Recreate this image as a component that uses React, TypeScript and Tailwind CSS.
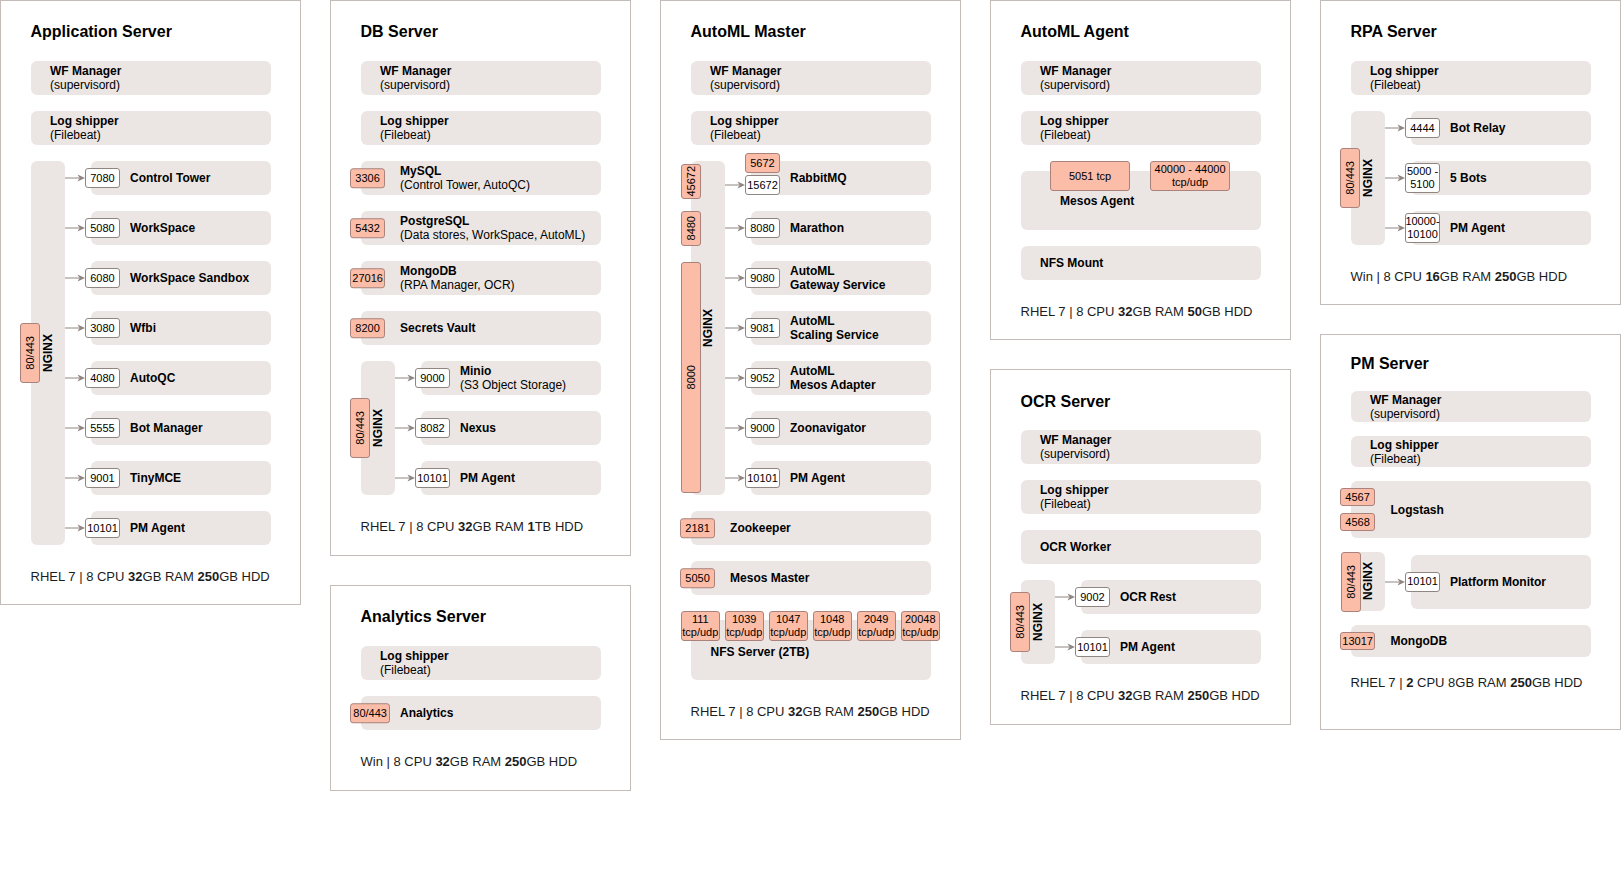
import type { ReactNode } from 'react'

const ROW = 'bg-[#ebe6e4] rounded-[6px]'
const TAG = 'bg-[#fbbca8] border border-[#a9827b] rounded-[3px]'
const PORT = 'bg-white border border-[#8f8682] rounded-[3px]'

function Card({
  title,
  className,
  pad = 'pt-[21px]',
  titleGap = 'mt-[19px]',
  gap = 'gap-[16px]',
  footerGap = 'mt-[24px]',
  footer,
  children,
}: {
  title: string
  className: string
  pad?: string
  titleGap?: string
  gap?: string
  footerGap?: string
  footer: ReactNode
  children: ReactNode
}) {
  return (
    <div className={`w-[301px] shrink-0 border border-[#c3bcb8] bg-white pl-[29.5px] pr-[29.5px] flex flex-col ${pad} ${className}`}>
      <div className="text-[16px] leading-[20px] font-bold text-black">{title}</div>
      <div className={`flex flex-col ${titleGap} ${gap}`}>{children}</div>
      <div className={`text-[13px] leading-[15px] text-[#1c1c1c] whitespace-nowrap ${footerGap}`}>{footer}</div>
    </div>
  )
}

function Label({ a, b, bb }: { a: string; b?: string; bb?: boolean }) {
  return (
    <div className="text-[12px] leading-[14px] text-black whitespace-nowrap">
      <div className="font-bold">{a}</div>
      {b && <div className={bb ? 'font-bold' : ''}>{b}</div>}
    </div>
  )
}

function Row({ h = 'h-[34px]', children }: { h?: string; children: ReactNode }) {
  return <div className={`relative ${ROW} ${h} flex items-center pl-[19.5px]`}>{children}</div>
}

function TagRow({
  tag,
  h = 'h-[34px]',
  tagW = 'w-[35px]',
  children,
}: {
  tag: string
  h?: string
  tagW?: string
  children: ReactNode
}) {
  return (
    <div className={`relative ${ROW} ${h} flex items-center pl-[39.6px]`}>
      <div className={`absolute left-[-10.4px] top-1/2 -translate-y-1/2 ${tagW} h-[19.5px] ${TAG} flex items-center justify-center text-[11px] leading-[12px] text-black`}>
        {tag}
      </div>
      {children}
    </div>
  )
}

function Arrow({ className = '' }: { className?: string }) {
  return (
    <svg width="20" height="10" viewBox="0 0 20 10" className={`shrink-0 ${className}`}>
      <path d="M0 5H14" stroke="#8f8682" strokeWidth="1" />
      <path d="M20 5L12.5 1.5L14.5 5L12.5 8.5Z" fill="#8f8682" />
    </svg>
  )
}

function VTag({ className, children }: { className: string; children: ReactNode }) {
  return (
    <div className={`absolute w-[20px] ${TAG} flex items-center justify-center ${className}`}>
      <span className="[writing-mode:vertical-rl] rotate-180 text-[11px] leading-[12px] text-black whitespace-nowrap">{children}</span>
    </div>
  )
}

function Nginx({ tags, className = '', children }: { tags?: ReactNode; className?: string; children: ReactNode }) {
  return (
    <div className={`flex ${className}`}>
      <div className={`relative w-[34.5px] shrink-0 ${ROW} flex items-center justify-center`}>
        <span className="[writing-mode:vertical-rl] rotate-180 text-[12px] leading-[14px] font-bold text-black">NGINX</span>
        {tags ?? <VTag className="left-[-10.4px] top-1/2 -translate-y-1/2 h-[60px]">80/443</VTag>}
      </div>
      <div className="flex-1 flex flex-col justify-center gap-[16px]">{children}</div>
    </div>
  )
}

function Item({
  port,
  portH = 'h-[20px]',
  h = 'h-[34px]',
  children,
}: {
  port: ReactNode
  portH?: string
  h?: string
  children: ReactNode
}) {
  return (
    <div className="flex items-center">
      <Arrow />
      <div className={`relative flex-1 ml-[5.5px] ${ROW} ${h} flex items-center pl-[39.5px]`}>
        <div className={`absolute left-[-5.5px] top-1/2 -translate-y-1/2 w-[35px] ${portH} ${PORT} flex flex-col items-center justify-center text-[11px] leading-[13px] text-black whitespace-nowrap`}>
          {port}
        </div>
        {children}
      </div>
    </div>
  )
}

function Std() {
  return (
    <>
      <Row>
        <Label a="WF Manager" b="(supervisord)" />
      </Row>
      <Row>
        <Label a="Log shipper" b="(Filebeat)" />
      </Row>
    </>
  )
}

export default function App() {
  return (
    <div className="w-[1621px] h-[891px] bg-white font-['Liberation_Sans',Arial,sans-serif] flex gap-[29px] items-start overflow-hidden">
      {/* column 1 */}
      <Card
        title="Application Server"
        className="h-[605px]"
        footer={<>RHEL 7 | 8 CPU <b>32</b>GB RAM <b>250</b>GB HDD</>}
      >
        <Std />
        <Nginx>
          <Item port="7080"><Label a="Control Tower" /></Item>
          <Item port="5080"><Label a="WorkSpace" /></Item>
          <Item port="6080"><Label a="WorkSpace Sandbox" /></Item>
          <Item port="3080"><Label a="Wfbi" /></Item>
          <Item port="4080"><Label a="AutoQC" /></Item>
          <Item port="5555"><Label a="Bot Manager" /></Item>
          <Item port="9001"><Label a="TinyMCE" /></Item>
          <Item port="10101"><Label a="PM Agent" /></Item>
        </Nginx>
      </Card>

      {/* column 2 */}
      <div className="flex flex-col gap-[29px]">
        <Card
          title="DB Server"
          className="h-[556px]"
          footer={<>RHEL 7 | 8 CPU <b>32</b>GB RAM <b>1</b>TB HDD</>}
        >
          <Std />
          <TagRow tag="3306"><Label a="MySQL" b="(Control Tower, AutoQC)" /></TagRow>
          <TagRow tag="5432"><Label a="PostgreSQL" b="(Data stores, WorkSpace, AutoML)" /></TagRow>
          <TagRow tag="27016"><Label a="MongoDB" b="(RPA Manager, OCR)" /></TagRow>
          <TagRow tag="8200"><Label a="Secrets Vault" /></TagRow>
          <Nginx>
            <Item port="9000"><Label a="Minio" b="(S3 Object Storage)" /></Item>
            <Item port="8082"><Label a="Nexus" /></Item>
            <Item port="10101"><Label a="PM Agent" /></Item>
          </Nginx>
        </Card>
        <Card
          title="Analytics Server"
          className="h-[206px]"
          footer={<>Win | 8 CPU <b>32</b>GB RAM <b>250</b>GB HDD</>}
        >
          <Row>
            <Label a="Log shipper" b="(Filebeat)" />
          </Row>
          <TagRow tag="80/443" tagW="w-[40px]"><Label a="Analytics" /></TagRow>
        </Card>
      </div>

      {/* column 3 */}
      <Card
        title="AutoML Master"
        className="h-[740px]"
        footer={<>RHEL 7 | 8 CPU <b>32</b>GB RAM <b>250</b>GB HDD</>}
      >
        <Std />
        <Nginx
          tags={
            <>
              <VTag className="left-[-10px] top-[2.5px] h-[35px]">45672</VTag>
              <VTag className="left-[-10px] top-[50px] h-[35px]">8480</VTag>
              <VTag className="left-[-10px] top-[101px] bottom-[2px]">8000</VTag>
            </>
          }
        >
          <div className="flex items-center">
            <Arrow className="translate-y-[7px]" />
            <div className={`relative flex-1 ml-[5.5px] ${ROW} h-[34px] flex items-center pl-[39.5px]`}>
              <div className={`absolute left-[-5.5px] bottom-[22px] w-[35px] h-[20px] ${TAG} flex items-center justify-center text-[11px] text-black`}>5672</div>
              <div className={`absolute left-[-5.5px] bottom-0 w-[35px] h-[20px] ${PORT} flex items-center justify-center text-[11px] text-black`}>15672</div>
              <Label a="RabbitMQ" />
            </div>
          </div>
          <Item port="8080"><Label a="Marathon" /></Item>
          <Item port="9080"><Label a="AutoML" b="Gateway Service" bb /></Item>
          <Item port="9081"><Label a="AutoML" b="Scaling Service" bb /></Item>
          <Item port="9052"><Label a="AutoML" b="Mesos Adapter" bb /></Item>
          <Item port="9000"><Label a="Zoonavigator" /></Item>
          <Item port="10101"><Label a="PM Agent" /></Item>
        </Nginx>
        <TagRow tag="2181"><Label a="Zookeeper" /></TagRow>
        <TagRow tag="5050"><Label a="Mesos Master" /></TagRow>
        <div className="pt-[9px]">
          <div className={`relative ${ROW} h-[60px] pl-[20px] pt-[25px]`}>
            <div className="absolute left-[-10px] top-[-9px] flex gap-[4.5px]">
              {['111', '1039', '1047', '1048', '2049', '20048'].map((p) => (
                <div key={p} className={`${TAG} w-[39.5px] h-[29.5px] flex flex-col items-center justify-center text-[11px] leading-[13px] text-black`}>
                  <span>{p}</span>
                  <span>tcp/udp</span>
                </div>
              ))}
            </div>
            <div className="text-[12px] leading-[14px] font-bold text-black">NFS Server (2TB)</div>
          </div>
        </div>
      </Card>

      {/* column 4 */}
      <div className="flex flex-col gap-[29px]">
        <Card
          title="AutoML Agent"
          className="h-[340px]"
          footer={<>RHEL 7 | 8 CPU <b>32</b>GB RAM <b>50</b>GB HDD</>}
        >
          <Std />
          <div className="pt-[10px]">
            <div className={`relative ${ROW} h-[59px] pl-[39.6px] pt-[23px]`}>
              <div className={`absolute left-[29.6px] top-[-10px] w-[80px] h-[30px] ${TAG} flex items-center justify-center text-[11px] text-black`}>
                5051 tcp
              </div>
              <div className={`absolute left-[129.6px] top-[-10px] w-[80px] h-[30px] ${TAG} flex flex-col items-center justify-center text-[11px] leading-[13px] text-black`}>
                <span>40000 - 44000</span>
                <span>tcp/udp</span>
              </div>
              <div className="text-[12px] leading-[14px] font-bold text-black">Mesos Agent</div>
            </div>
          </div>
          <Row>
            <Label a="NFS Mount" />
          </Row>
        </Card>
        <Card
          title="OCR Server"
          className="h-[356px]"
          pad="pt-[22px]"
          titleGap="mt-[18px]"
          footer={<>RHEL 7 | 8 CPU <b>32</b>GB RAM <b>250</b>GB HDD</>}
        >
          <Std />
          <Row>
            <Label a="OCR Worker" />
          </Row>
          <Nginx>
            <Item port="9002"><Label a="OCR Rest" /></Item>
            <Item port="10101"><Label a="PM Agent" /></Item>
          </Nginx>
        </Card>
      </div>

      {/* column 5 */}
      <div className="flex flex-col gap-[29px]">
        <Card
          title="RPA Server"
          className="h-[305px]"
          footer={<>Win | 8 CPU <b>16</b>GB RAM <b>250</b>GB HDD</>}
        >
          <Row>
            <Label a="Log shipper" b="(Filebeat)" />
          </Row>
          <Nginx>
            <Item port="4444"><Label a="Bot Relay" /></Item>
            <Item port={<><span>5000 -</span><span>5100</span></>} portH="h-[30px]"><Label a="5 Bots" /></Item>
            <Item port={<><span>10000-</span><span>10100</span></>} portH="h-[30px]"><Label a="PM Agent" /></Item>
          </Nginx>
        </Card>
        <Card
          title="PM Server"
          className="h-[396px]"
          pad="pt-[19px]"
          titleGap="mt-[17px]"
          gap="gap-[14px]"
          footerGap="mt-[18px]"
          footer={<>RHEL 7 | <b>2</b> CPU 8GB RAM <b>250</b>GB HDD</>}
        >
          <Row h="h-[31px]">
            <Label a="WF Manager" b="(supervisord)" />
          </Row>
          <Row h="h-[31px]">
            <Label a="Log shipper" b="(Filebeat)" />
          </Row>
          <div className={`relative ${ROW} h-[57px] flex items-center pl-[40px]`}>
            <div className={`absolute left-[-10.4px] top-[7px] w-[35px] h-[18px] ${TAG} flex items-center justify-center text-[11px] text-black`}>4567</div>
            <div className={`absolute left-[-10.4px] top-[32px] w-[35px] h-[18px] ${TAG} flex items-center justify-center text-[11px] text-black`}>4568</div>
            <Label a="Logstash" />
          </div>
          <Nginx
            className="h-[59px]"
            tags={<VTag className="left-[-9.4px] top-1/2 -translate-y-1/2 h-[60px] w-[19px]">80/443</VTag>}
          >
            <Item port="10101" h="h-[54px]"><Label a="Platform Monitor" /></Item>
          </Nginx>
          <div className={`relative ${ROW} h-[32px] flex items-center pl-[40px]`}>
            <div className={`absolute left-[-10.4px] top-1/2 -translate-y-1/2 w-[35px] h-[18px] ${TAG} flex items-center justify-center text-[11px] text-black`}>13017</div>
            <Label a="MongoDB" />
          </div>
        </Card>
      </div>
    </div>
  )
}
